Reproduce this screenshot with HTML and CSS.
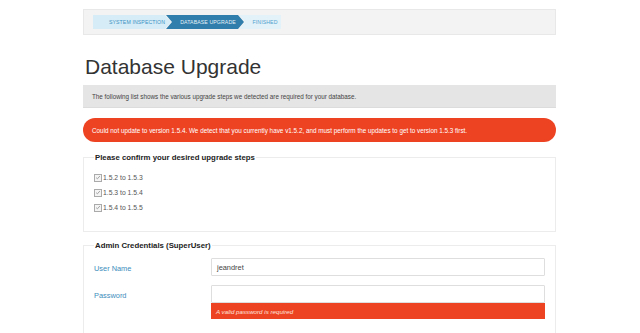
FILE: index.html
```html
<!DOCTYPE html>
<html>
<head>
<meta charset="utf-8">
<link rel="stylesheet" href="styles.css">
</head>
<body>
<div class="page">
  <div class="wizard">
    <div class="step step-first">SYSTEM INSPECTION</div>
    <div class="step step-active">DATABASE UPGRADE</div>
    <div class="step step-last">FINISHED</div>
  </div>
  <h1 class="title">Database Upgrade</h1>
  <div class="info">The following list shows the various upgrade steps we detected are required for your database.</div>
  <div class="alert">Could not update to version 1.5.4. We detect that you currently have v1.5.2, and must perform the updates to get to version 1.5.3 first.</div>
  <fieldset class="group group-steps">
    <legend class="legend">Please confirm your desired upgrade steps</legend>
    <label class="check"><span class="box"><svg viewBox="0 0 8 8" width="7" height="7"><path d="M1.5 4.2 L3.2 5.8 L6.5 2" fill="none" stroke="#8a8a8a" stroke-width="1"/></svg></span>1.5.2 to 1.5.3</label>
    <label class="check"><span class="box"><svg viewBox="0 0 8 8" width="7" height="7"><path d="M1.5 4.2 L3.2 5.8 L6.5 2" fill="none" stroke="#8a8a8a" stroke-width="1"/></svg></span>1.5.3 to 1.5.4</label>
    <label class="check"><span class="box"><svg viewBox="0 0 8 8" width="7" height="7"><path d="M1.5 4.2 L3.2 5.8 L6.5 2" fill="none" stroke="#8a8a8a" stroke-width="1"/></svg></span>1.5.4 to 1.5.5</label>
  </fieldset>
  <fieldset class="group group-creds">
    <legend class="legend">Admin Credentials (SuperUser)</legend>
    <div class="row">
      <div class="field-label">User Name</div>
      <div class="field"><div class="input">jeandret</div></div>
    </div>
    <div class="row">
      <div class="field-label">Password</div>
      <div class="field"><div class="input"></div><div class="error">A valid password is required</div></div>
    </div>
  </fieldset>
</div>
</body>
</html>
```

FILE: styles.css
```css
html, body {
  margin: 0;
  padding: 0;
  background: #ffffff;
  font-family: "Liberation Sans", Arial, sans-serif;
  overflow: hidden;
}
.page {
  width: 473px;
  margin-left: 83px;
  padding-top: 9px;
}
.wizard {
  display: flex;
  align-items: center;
  height: 26px;
  box-sizing: border-box;
  background: #f3f3f3;
  border: 1px solid #e8e8e8;
  padding-left: 9px;
}
.step {
  height: 14px;
  display: flex;
  align-items: center;
  justify-content: center;
  font-size: 5.2px;
  letter-spacing: 0.1px;
  box-sizing: border-box;
  clip-path: polygon(0 0, calc(100% - 6px) 0, 100% 50%, calc(100% - 6px) 100%, 0 100%, 6px 50%);
}
.step-first {
  width: 78px;
  background: #d6ecf7;
  color: #3b92c4;
  padding-left: 10px;
  clip-path: polygon(0 0, calc(100% - 6px) 0, 100% 50%, calc(100% - 6px) 100%, 0 100%);
}
.step-active {
  width: 78px;
  margin-left: -5px;
  background: #2f7eac;
  color: #e6f2f8;
  padding-left: 6px;
}
.step-last {
  width: 42px;
  margin-left: -5px;
  background: #e3f1f8;
  color: #4fa3cf;
  padding-left: 10px;
  clip-path: polygon(0 0, 100% 0, 100% 100%, 0 100%, 6px 50%);
}
.title {
  margin: 19px 0 0 2px;
  font-size: 21px;
  font-weight: normal;
  color: #333;
  line-height: 26px;
}
.info {
  margin-top: 5px;
  height: 23px;
  background: #e5e5e5;
  color: #444;
  font-size: 6.3px;
  display: flex;
  align-items: center;
  padding-left: 9px;
  border-bottom: 1px solid #dcdcdc;
  box-sizing: border-box;
}
.alert {
  margin-top: 10px;
  height: 24px;
  background: #ee4323;
  border-radius: 12px;
  color: #fff;
  font-size: 6.35px;
  display: flex;
  align-items: center;
  padding-left: 9px;
}
.group {
  margin: 0;
  border: 1px solid #ececec;
  padding: 0 10px;
}
.group-steps {
  margin-top: 11px;
  height: 79px;
  box-sizing: border-box;
  padding-top: 8px;
}
.group-creds {
  margin-top: 9px;
  padding-top: 8px;
  padding-bottom: 20px;
}
.legend {
  padding: 0 1px;
  margin-left: 0;
  font-size: 7.8px;
  font-weight: bold;
  color: #222;
}
.check {
  display: flex;
  align-items: center;
  font-size: 6.8px;
  color: #555;
  height: 15px;
}
.box {
  width: 6px;
  height: 6px;
  border: 1px solid #aaa;
  margin-right: 1px;
  display: flex;
  align-items: center;
  justify-content: center;
  overflow: hidden;
  background: #f4f4f4;
}
.row {
  display: flex;
  align-items: flex-start;
  margin-bottom: 9px;
}
.field-label {
  width: 117px;
  font-size: 7.4px;
  color: #3c8dbc;
  padding-top: 6px;
}
.field {
  width: 334px;
}
.input {
  height: 18px;
  box-sizing: border-box;
  border: 1px solid #dedede;
  border-radius: 1px;
  font-size: 7.4px;
  color: #444;
  padding-left: 5px;
  display: flex;
  align-items: center;
  background: #fff;
}
.error {
  height: 16px;
  background: #ee4323;
  color: #fde3dc;
  font-style: italic;
  font-size: 6.2px;
  display: flex;
  align-items: center;
  padding-left: 5px;
}
```
